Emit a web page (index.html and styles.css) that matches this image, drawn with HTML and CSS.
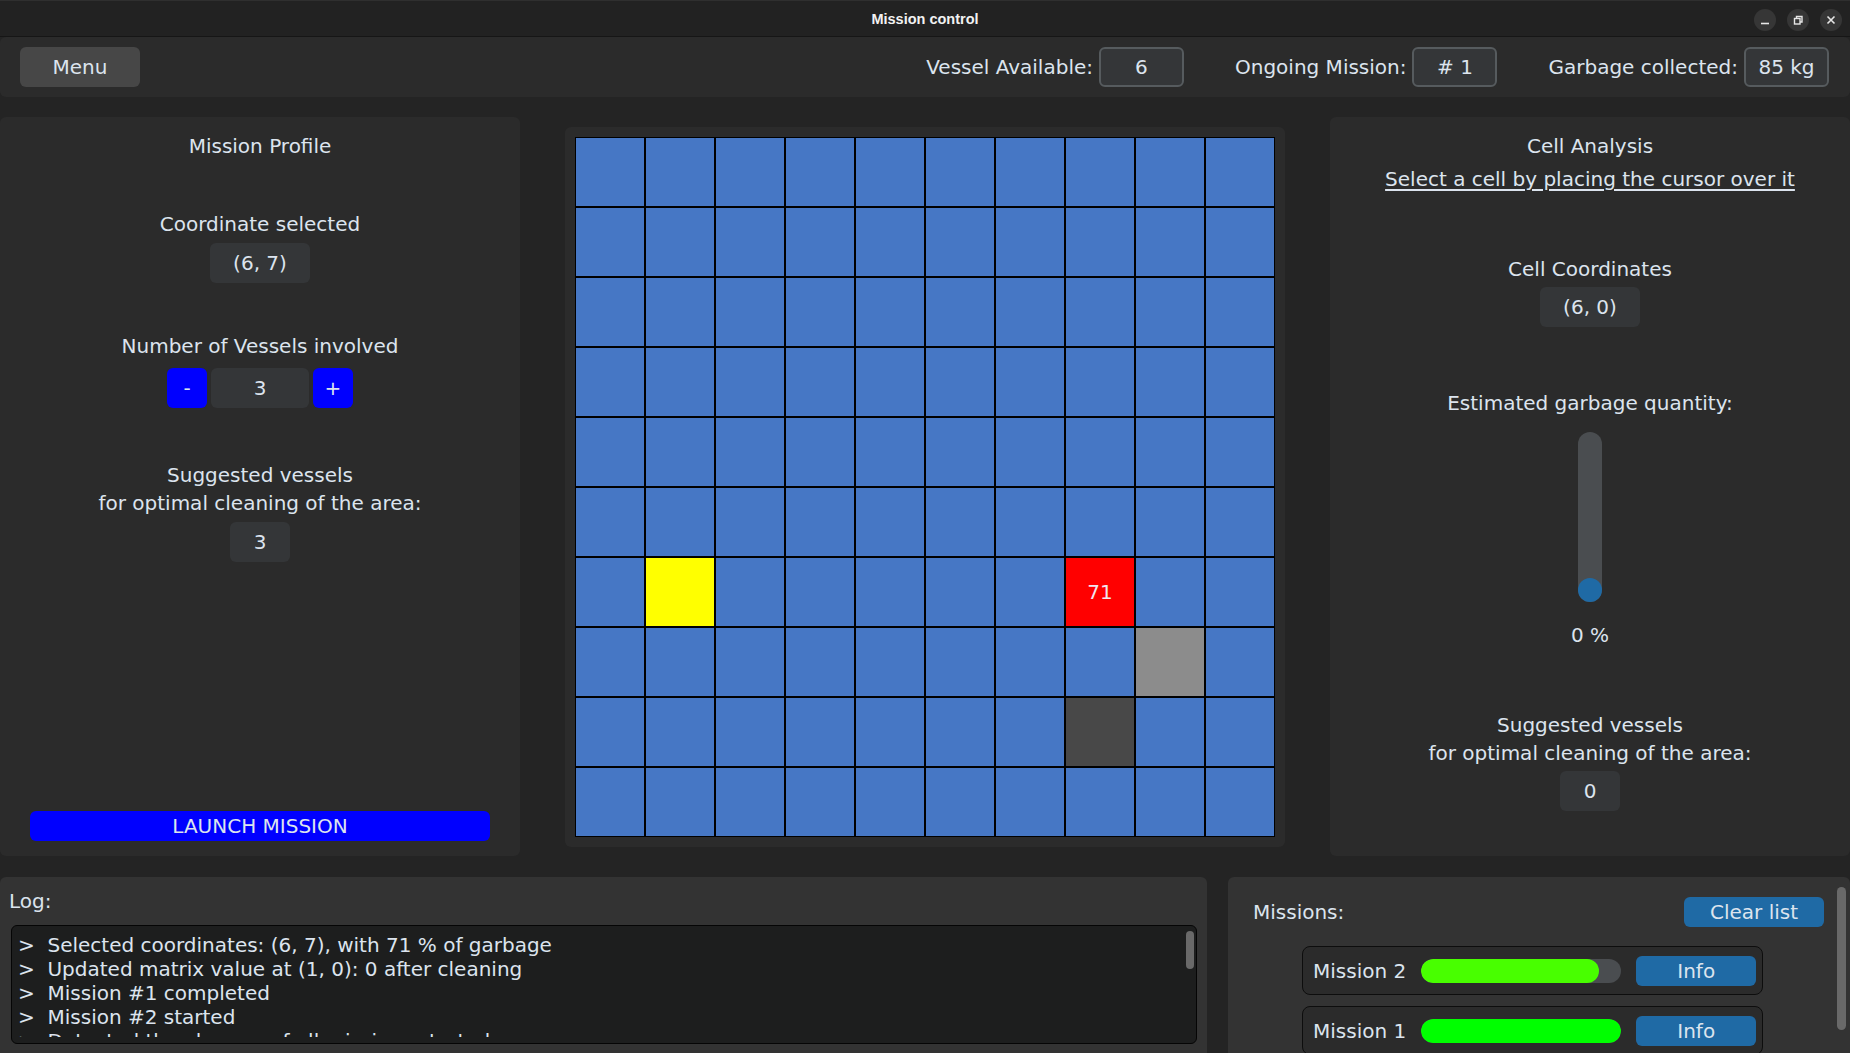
FILE: index.html
```html
<!DOCTYPE html>
<html lang="en">
<head>
<meta charset="utf-8">
<title>Mission control</title>
<link rel="stylesheet" href="styles.css">
</head>
<body>
<header class="titlebar">
  <div class="title">Mission control</div>
  <div class="wincontrols">
    <span class="wbtn"><svg width="22" height="22" viewBox="0 0 22 22"><path d="M7 14.5h8" stroke="#e6e6e6" stroke-width="1.6" fill="none"/></svg></span>
    <span class="wbtn"><svg width="22" height="22" viewBox="0 0 22 22"><rect x="7.5" y="9.5" width="5.5" height="5.5" stroke="#e6e6e6" stroke-width="1.4" fill="none"/><path d="M9.5 9.5V7.5h5.5V13h-2" stroke="#e6e6e6" stroke-width="1.4" fill="none"/></svg></span>
    <span class="wbtn"><svg width="22" height="22" viewBox="0 0 22 22"><path d="M7.5 7.5l7 7M14.5 7.5l-7 7" stroke="#e6e6e6" stroke-width="1.6" fill="none"/></svg></span>
  </div>
</header>

<div class="toolbar">
  <button class="menu-btn">Menu</button>
  <div class="stats">
    <div class="stat"><span>Vessel Available:</span><span class="stat-box">6</span></div>
    <div class="stat"><span>Ongoing Mission:</span><span class="stat-box"># 1</span></div>
    <div class="stat"><span>Garbage collected:</span><span class="stat-box">85 kg</span></div>
  </div>
</div>

<main class="main">
  <section class="panel">
    <div class="lbl">Mission Profile</div>
    <div class="lbl mt54">Coordinate selected</div>
    <div class="valbox w100 mt7">(6, 7)</div>
    <div class="lbl mt51">Number of Vessels involved</div>
    <div class="stepper">
      <button class="step-btn">-</button>
      <div class="valbox w98">3</div>
      <button class="step-btn">+</button>
    </div>
    <div class="lbl2 mt53">Suggested vessels<br>for optimal cleaning of the area:</div>
    <div class="valbox w60 mt5">3</div>
    <button class="launch">LAUNCH MISSION</button>
  </section>

  <section class="grid-panel">
    <div class="grid">
      <div class="cell"></div><div class="cell"></div><div class="cell"></div><div class="cell"></div><div class="cell"></div><div class="cell"></div><div class="cell"></div><div class="cell"></div><div class="cell"></div><div class="cell"></div>
      <div class="cell"></div><div class="cell"></div><div class="cell"></div><div class="cell"></div><div class="cell"></div><div class="cell"></div><div class="cell"></div><div class="cell"></div><div class="cell"></div><div class="cell"></div>
      <div class="cell"></div><div class="cell"></div><div class="cell"></div><div class="cell"></div><div class="cell"></div><div class="cell"></div><div class="cell"></div><div class="cell"></div><div class="cell"></div><div class="cell"></div>
      <div class="cell"></div><div class="cell"></div><div class="cell"></div><div class="cell"></div><div class="cell"></div><div class="cell"></div><div class="cell"></div><div class="cell"></div><div class="cell"></div><div class="cell"></div>
      <div class="cell"></div><div class="cell"></div><div class="cell"></div><div class="cell"></div><div class="cell"></div><div class="cell"></div><div class="cell"></div><div class="cell"></div><div class="cell"></div><div class="cell"></div>
      <div class="cell"></div><div class="cell"></div><div class="cell"></div><div class="cell"></div><div class="cell"></div><div class="cell"></div><div class="cell"></div><div class="cell"></div><div class="cell"></div><div class="cell"></div>
      <div class="cell"></div><div class="cell yellow"></div><div class="cell"></div><div class="cell"></div><div class="cell"></div><div class="cell"></div><div class="cell"></div><div class="cell red">71</div><div class="cell"></div><div class="cell"></div>
      <div class="cell"></div><div class="cell"></div><div class="cell"></div><div class="cell"></div><div class="cell"></div><div class="cell"></div><div class="cell"></div><div class="cell"></div><div class="cell lightgrey"></div><div class="cell"></div>
      <div class="cell"></div><div class="cell"></div><div class="cell"></div><div class="cell"></div><div class="cell"></div><div class="cell"></div><div class="cell"></div><div class="cell darkgrey"></div><div class="cell"></div><div class="cell"></div>
      <div class="cell"></div><div class="cell"></div><div class="cell"></div><div class="cell"></div><div class="cell"></div><div class="cell"></div><div class="cell"></div><div class="cell"></div><div class="cell"></div><div class="cell"></div>
    </div>
  </section>

  <section class="panel">
    <div class="lbl">Cell Analysis</div>
    <div class="lbl link mt9">Select a cell by placing the cursor over it</div>
    <div class="lbl mt66">Cell Coordinates</div>
    <div class="valbox w100 mt6">(6, 0)</div>
    <div class="lbl mt64">Estimated garbage quantity:</div>
    <div class="slider"><span class="knob"></span></div>
    <div class="lbl mt21">0 %</div>
    <div class="lbl2 mt64">Suggested vessels<br>for optimal cleaning of the area:</div>
    <div class="valbox w60 mt4">0</div>
  </section>
</main>

<div class="bottom">
  <section class="log-panel">
    <div class="log-title">Log:</div>
    <div class="log-box">
      <div class="log-lines">
        <div class="log-line">&gt;  Selected coordinates: (6, 7), with 71 % of garbage</div>
        <div class="log-line">&gt;  Updated matrix value at (1, 0): 0 after cleaning</div>
        <div class="log-line">&gt;  Mission #1 completed</div>
        <div class="log-line">&gt;  Mission #2 started</div>
        <div class="log-line">&gt;  Detected the cleanup of all missions started</div>
      </div>
      <span class="log-scroll"></span>
    </div>
  </section>
  <section class="missions-panel">
    <div class="missions-head">
      <span>Missions:</span>
      <button class="blue-btn clear">Clear list</button>
    </div>
    <div class="mission-list">
      <div class="mission-row">
        <span class="mission-name">Mission 2</span>
        <div class="progress"><div class="fill fill-partial" style="width: 89%"></div></div>
        <button class="blue-btn info">Info</button>
      </div>
      <div class="mission-row">
        <span class="mission-name">Mission 1</span>
        <div class="progress"><div class="fill fill-done" style="width: 100%"></div></div>
        <button class="blue-btn info">Info</button>
      </div>
    </div>
    <span class="missions-scroll"></span>
  </section>
</div>
</body>
</html>
```

FILE: styles.css
```css
* { box-sizing: border-box; }

html, body {
  margin: 0;
  padding: 0;
}

body {
  width: 1850px;
  height: 1053px;
  overflow: hidden;
  background: #242424;
  font-family: "DejaVu Sans", "Noto Sans", sans-serif;
  font-size: 20px;
  color: #dce4ee;
}

button {
  font-family: inherit;
  font-size: 20px;
  color: #dce4ee;
  border: none;
  padding: 0;
  cursor: pointer;
}

/* ---------- title bar ---------- */
.titlebar {
  height: 37px;
  background: #222222;
  border-top: 1px solid #2f2f2f;
  border-bottom: 1px solid #161616;
  display: grid;
  grid-template-columns: 1fr auto 1fr;
  align-items: center;
}

.title {
  grid-column: 2;
  font-family: "Liberation Sans", sans-serif;
  font-weight: bold;
  font-size: 14.5px;
  color: #f2f2f2;
}

.wincontrols {
  grid-column: 3;
  justify-self: end;
  display: flex;
  gap: 11px;
  padding-right: 8px;
  padding-top: 2px;
}

.wbtn {
  width: 22px;
  height: 22px;
  border-radius: 50%;
  background: #363636;
  display: flex;
}

/* ---------- toolbar ---------- */
.toolbar {
  height: 60px;
  background: #2b2b2b;
  border-radius: 6px;
  display: flex;
  align-items: center;
  justify-content: space-between;
  padding: 0 21px 0 20px;
}

.menu-btn {
  width: 120px;
  height: 40px;
  border-radius: 6px;
  background: #474747;
}

.stats {
  display: flex;
  align-items: center;
  gap: 51px;
}

.stat {
  display: flex;
  align-items: center;
  gap: 6px;
}

.stat-box {
  width: 85px;
  height: 40px;
  border: 2px solid #565b5e;
  background: #343638;
  border-radius: 6px;
  display: flex;
  align-items: center;
  justify-content: center;
}

/* ---------- main row ---------- */
.main {
  margin-top: 20px;
  height: 739px;
  display: flex;
  align-items: center;
  justify-content: space-between;
}

.panel {
  width: 520px;
  height: 739px;
  background: #2b2b2b;
  border-radius: 6px;
  display: flex;
  flex-direction: column;
  align-items: center;
  padding-top: 17px;
}

.lbl {
  line-height: 24px;
  white-space: nowrap;
}

.lbl2 {
  line-height: 28px;
  text-align: center;
}

.link {
  text-decoration: underline;
  text-decoration-thickness: 2px;
  text-underline-offset: 3px;
}

.valbox {
  height: 40px;
  background: #343638;
  border-radius: 6px;
  display: flex;
  align-items: center;
  justify-content: center;
}

.w100 { width: 100px; }
.w98 { width: 98px; }
.w60 { width: 60px; }

.mt4 { margin-top: 4px; }
.mt5 { margin-top: 5px; }
.mt6 { margin-top: 6px; }
.mt7 { margin-top: 7px; }
.mt9 { margin-top: 9px; }
.mt21 { margin-top: 21px; }
.mt51 { margin-top: 51px; }
.mt53 { margin-top: 53px; }
.mt54 { margin-top: 54px; }
.mt64 { margin-top: 64px; }
.mt66 { margin-top: 66px; }

.stepper {
  margin-top: 10px;
  display: flex;
  gap: 4px;
}

.step-btn {
  width: 40px;
  height: 40px;
  border-radius: 6px;
  background: #0000ff;
}

.launch {
  margin-top: auto;
  margin-bottom: 15px;
  width: 460px;
  height: 30px;
  border-radius: 6px;
  background: #0000ff;
}

.slider {
  position: relative;
  margin-top: 17px;
  width: 24px;
  height: 170px;
  border-radius: 12px;
  background: #4a4d50;
}

.knob {
  position: absolute;
  left: 0;
  bottom: 0;
  width: 24px;
  height: 24px;
  border-radius: 50%;
  background: #1f6aa5;
}

/* ---------- grid ---------- */
.grid-panel {
  width: 720px;
  height: 720px;
  background: #2b2b2b;
  border-radius: 6px;
  padding: 10px;
}

.grid {
  width: 700px;
  height: 700px;
  background: #000;
  padding: 1px;
  display: grid;
  grid-template-columns: repeat(10, 1fr);
  grid-template-rows: repeat(10, 1fr);
  gap: 2px;
}

.cell {
  background: #4677c5;
  display: flex;
  align-items: center;
  justify-content: center;
  color: #f1e6ee;
}

.cell.yellow { background: #ffff00; }
.cell.red { background: #ff0000; }
.cell.lightgrey { background: #8c8c8c; }
.cell.darkgrey { background: #484848; }

/* ---------- bottom row ---------- */
.bottom {
  margin-top: 21px;
  display: flex;
  gap: 21px;
}

.log-panel {
  width: 1207px;
  height: 190px;
  background: #333333;
  border-radius: 6px;
  padding-top: 12px;
}

.log-title {
  line-height: 24px;
  padding-left: 9px;
}

.log-box {
  position: relative;
  margin: 12px 10px 0 11px;
  height: 119px;
  background: #1d1e1e;
  border: 1px solid #050505;
  border-radius: 6px;
  padding: 0 0 0 6px;
}

.log-lines {
  height: 111px;
  padding-top: 7px;
  overflow: hidden;
}

.log-line {
  line-height: 24px;
  white-space: pre;
}

.log-scroll {
  position: absolute;
  right: 2px;
  top: 5px;
  width: 8px;
  height: 38px;
  border-radius: 4px;
  background: #696969;
}

.missions-panel {
  position: relative;
  flex: 1;
  height: 190px;
  background: #333333;
  border-radius: 6px;
  padding: 20px 26px 0 25px;
}

.missions-head {
  display: flex;
  align-items: center;
  justify-content: space-between;
  height: 30px;
}

.blue-btn {
  height: 30px;
  border-radius: 6px;
  background: #1f6aa5;
}

.clear { width: 140px; }
.info { width: 120px; margin-left: 15px; }

.mission-list {
  margin-top: 19px;
  margin-left: 49px;
  width: 461px;
  display: flex;
  flex-direction: column;
  gap: 11px;
}

.mission-row {
  height: 49px;
  border: 1px solid #0d0d0d;
  border-radius: 8px;
  background: #2b2b2b;
  display: flex;
  align-items: center;
  padding-left: 10px;
}

.mission-name {
  white-space: nowrap;
}

.progress {
  margin-left: 15px;
  width: 200px;
  height: 24px;
  border-radius: 12px;
  background: #4a4d50;
  overflow: hidden;
}

.fill {
  height: 100%;
  border-radius: 12px;
}

.fill-partial { background: #48ff00; }
.fill-done { background: #00ff00; }

.missions-scroll {
  position: absolute;
  right: 4px;
  top: 10px;
  width: 9px;
  height: 143px;
  border-radius: 5px;
  background: #696969;
}
```
